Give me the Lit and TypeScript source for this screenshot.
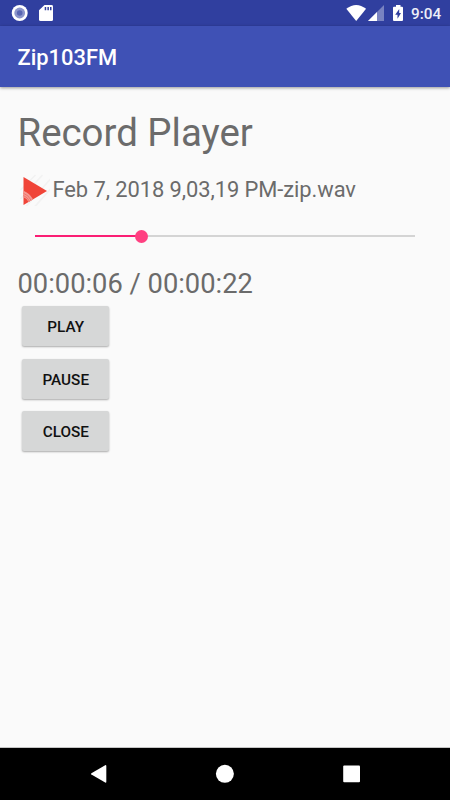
import { LitElement, html, css } from "lit";
import { customElement, state } from "lit/decorators.js";

@customElement("app-root")
class AppRoot extends LitElement {
  @state() progress = 27.9;

  static styles = css`
    :host {
      display: flex;
      flex-direction: column;
      width: 450px;
      height: 800px;
      overflow: hidden;
      background: #fafafa;
      color: #6b6b6b;
      font-family: Roboto, sans-serif;
      white-space: nowrap;
    }
    svg { display: block; flex: none; }
    .status {
      flex: none;
      height: 26px;
      background: #303f9f;
      display: flex;
      align-items: center;
      color: #fff;
    }
    .icons { margin-right: -46px; }
    .clock {
      margin-left: 7px;
      font-size: 15.3px;
      font-weight: 500;
      line-height: 26px;
      padding-top: 1px;
      color: #edeff8;
    }
    .bar {
      flex: none;
      height: 61px;
      background: #3f51b5;
      box-shadow: 0 1px 3px rgba(0, 0, 0, 0.4);
      color: #fff;
      font-size: 21.9px;
      font-weight: 500;
      line-height: 63px;
      padding-left: 17.5px;
    }
    .content { flex: 1; padding: 18px 17.5px 0; }
    .heading { font-size: 38.4px; line-height: 56px; }
    .file {
      display: flex;
      align-items: center;
      height: 32px;
      margin-top: 13px;
      font-size: 21.9px;
      line-height: 32px;
    }
    .name { margin-left: 3px; letter-spacing: -0.07px; }
    .seek { height: 30px; margin: 15px 17.5px 0; display: flex; align-items: center; }
    .track { position: relative; width: 380px; height: 2px; background: #d4d4d4; }
    .done { height: 2px; background: #fa1e74; }
    .thumb {
      position: absolute;
      top: -5.5px;
      width: 13px;
      height: 13px;
      margin-left: -6.5px;
      border-radius: 50%;
      background: #ff4081;
    }
    .time { font-size: 27.3px; line-height: 34px; margin-top: 16px; }
    .buttons { display: flex; flex-direction: column; gap: 12.5px; margin: 5.4px 0 0 4.5px; }
    .btn {
      box-sizing: border-box;
      width: 87px;
      height: 40px;
      border: 0;
      padding: 2px 0 0 0.5px;
      border-radius: 2px;
      background: #d6d7d7;
      box-shadow: 0 1px 2px rgba(0, 0, 0, 0.32);
      color: #111;
      font: 500 15.3px/38px Roboto, sans-serif;
      text-align: center;
    }
    .nav { flex: none; height: 52px; background: #000; box-shadow: 0 -1px 0 #c4c4c4; }
  `;

  render() {
    return html`
      <div class="status">
        <svg class="icons" width="450" height="26" viewBox="0 0 450 26">
          <circle cx="19.7" cy="13" r="8" fill="#fff" />
          <circle cx="19.7" cy="13" r="5.4" fill="#8c95cb" />
          <circle cx="19.7" cy="13" r="2.8" fill="#5966b3" />
          <path d="M44.5 5H51.6Q53 5 53 6.4V19.5Q53 21 51.6 21H40.5Q39 21 39 19.5V10.2Z" fill="#fff" />
          <path d="M44.7 7H46.2V10.2H44.7ZM47.4 7H48.9V10.2H47.4ZM50 7H51.5V10.2H50Z" fill="#303f9f" />
          <path d="M346.3 8.8Q356.2 1.2 366.1 8.8L356.2 21Z" fill="#fff" />
          <path d="M384 5V21H368Z" fill="#7983c1" />
          <path d="M377 12V21H368Z" fill="#fff" />
          <path d="M396 5H400.5V6.8H402Q403 6.8 403 7.8V20Q403 21 402 21H394Q393 21 393 20V7.8Q393 6.8 394 6.8H396Z" fill="#fff" />
          <path d="M399.2 9L395.2 14.7H397.5V18.8L401 13H399.2Z" fill="#303f9f" />
        </svg>
        <span class="clock">9:04</span>
      </div>
      <div class="bar">Zip103FM</div>
      <div class="content">
        <div class="heading">Record Player</div>
        <div class="file">
          <svg width="32" height="32" viewBox="17.5 174 32 32">
            <path d="M25 207L50 179M34 207L50 189M20 190L35 175M20 199L42 175" stroke="#f2f2f2" stroke-width="1.7" />
            <path d="M23 177L46.5 190.9L23 205Z" fill="#f04438" />
            <path d="M23 190.7Q29 193 32.5 199.3L28 202Q26.5 198.5 23 197.2Z" fill="#f49992" />
            <path d="M23 193.3Q28 195 30.7 200.4M23 195.6Q27 197 29 201.4" fill="none" stroke="#f16a60" stroke-width=".8" />
          </svg>
          <span class="name">Feb 7, 2018 9,03,19 PM-zip.wav</span>
        </div>
        <div class="seek">
          <div class="track">
            <div class="done" style="width:${this.progress}%"></div>
            <div class="thumb" style="left:${this.progress}%"></div>
          </div>
        </div>
        <div class="time">00:00:06 / 00:00:22</div>
        <div class="buttons">
          ${["PLAY", "PAUSE", "CLOSE"].map((t) => html`<button class="btn">${t}</button>`)}
        </div>
      </div>
      <div class="nav">
        <svg width="450" height="52" viewBox="0 748 450 52" fill="#fff">
          <path d="M105.2 765.2Q106.3 764.8 106.3 766V781.8Q106.3 783 105.2 782.5L91.4 774.6Q90.6 773.9 91.4 773.2Z" />
          <circle cx="224.9" cy="773.8" r="9" />
          <rect x="343.2" y="765.4" width="16.8" height="16.8" rx="1" />
        </svg>
      </div>
    `;
  }
}
